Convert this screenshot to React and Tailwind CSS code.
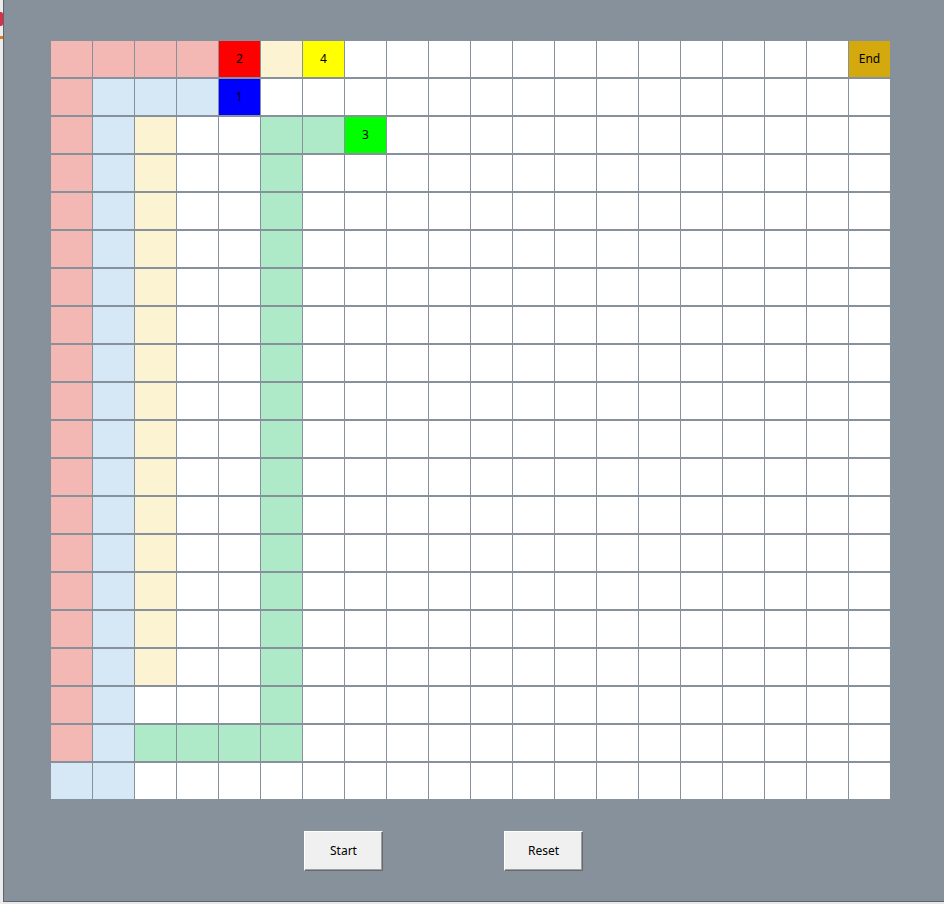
import React from "react";

const P = "bg-[#f4b8b4]";
const B = "bg-[#d6e8f6]";
const C = "bg-[#fcf3d2]";
const M = "bg-[#aeeac8]";
const W = "bg-white";

function cellInfo(r, c) {
  if (r === 0) {
    if (c <= 3) return [P, ""];
    if (c === 4) return ["bg-[#ff0000]", "2"];
    if (c === 5) return [C, ""];
    if (c === 6) return ["bg-[#ffff00]", "4"];
    if (c === 19) return ["bg-[#d4a90d]", "End"];
    return [W, ""];
  }
  if (r === 1) {
    if (c === 0) return [P, ""];
    if (c >= 1 && c <= 3) return [B, ""];
    if (c === 4) return ["bg-[#0000ff]", "1"];
    return [W, ""];
  }
  if (r === 2) {
    if (c === 0) return [P, ""];
    if (c === 1) return [B, ""];
    if (c === 2) return [C, ""];
    if (c === 5 || c === 6) return [M, ""];
    if (c === 7) return ["bg-[#00ff00]", "3"];
    return [W, ""];
  }
  if (r >= 3 && r <= 16) {
    if (c === 0) return [P, ""];
    if (c === 1) return [B, ""];
    if (c === 2) return [C, ""];
    if (c === 5) return [M, ""];
    return [W, ""];
  }
  if (r === 17) {
    if (c === 0) return [P, ""];
    if (c === 1) return [B, ""];
    if (c === 5) return [M, ""];
    return [W, ""];
  }
  if (r === 18) {
    if (c === 0) return [P, ""];
    if (c === 1) return [B, ""];
    if (c >= 2 && c <= 5) return [M, ""];
    return [W, ""];
  }
  if (c <= 1) return [B, ""];
  return [W, ""];
}

function Btn({ children }) {
  return (
    <button className="w-[79px] h-[40px] bg-[#f0f0f0] border border-t-white border-l-white border-r-[#696969] border-b-[#696969] shadow-[inset_-1px_-1px_0_#a0a0a0] text-[12px] text-black flex items-center justify-center">
      {children}
    </button>
  );
}

export default function App() {
  const cells = [];
  for (let r = 0; r < 20; r++) {
    for (let c = 0; c < 20; c++) {
      const [bg, t] = cellInfo(r, c);
      cells.push(
        <div
          key={r + "-" + c}
          className={`${bg} w-[41px] h-[36px] flex items-center justify-center text-[12px] text-black`}
        >
          {t}
        </div>
      );
    }
  }
  return (
    <div
      className="w-[944px] h-[904px] flex bg-[#e8e8e8] overflow-hidden"
      style={{ fontFamily: '"Noto Sans", "Liberation Sans", sans-serif' }}
    >
      <div className="w-[3px] shrink-0 flex flex-col bg-[#ececec]">
        <div className="h-[12px]" />
        <div className="h-[14px] bg-[#d9304a] rounded-r-[2px]" />
        <div className="h-[10px]" />
        <div className="h-[3px] bg-[#e07a1c]" />
      </div>
      <div className="w-[941px] h-[902px] bg-[#87919c] border-l border-b border-[#5f646a] flex flex-col pl-[47px] pt-[41px]">
        <div className="grid grid-cols-[repeat(20,41px)] gap-x-[1px] gap-y-[2px] w-[839px]">
          {cells}
        </div>
        <div className="flex mt-[32px] ml-[253px] gap-[121px]">
          <Btn>Start</Btn>
          <Btn>Reset</Btn>
        </div>
      </div>
    </div>
  );
}
